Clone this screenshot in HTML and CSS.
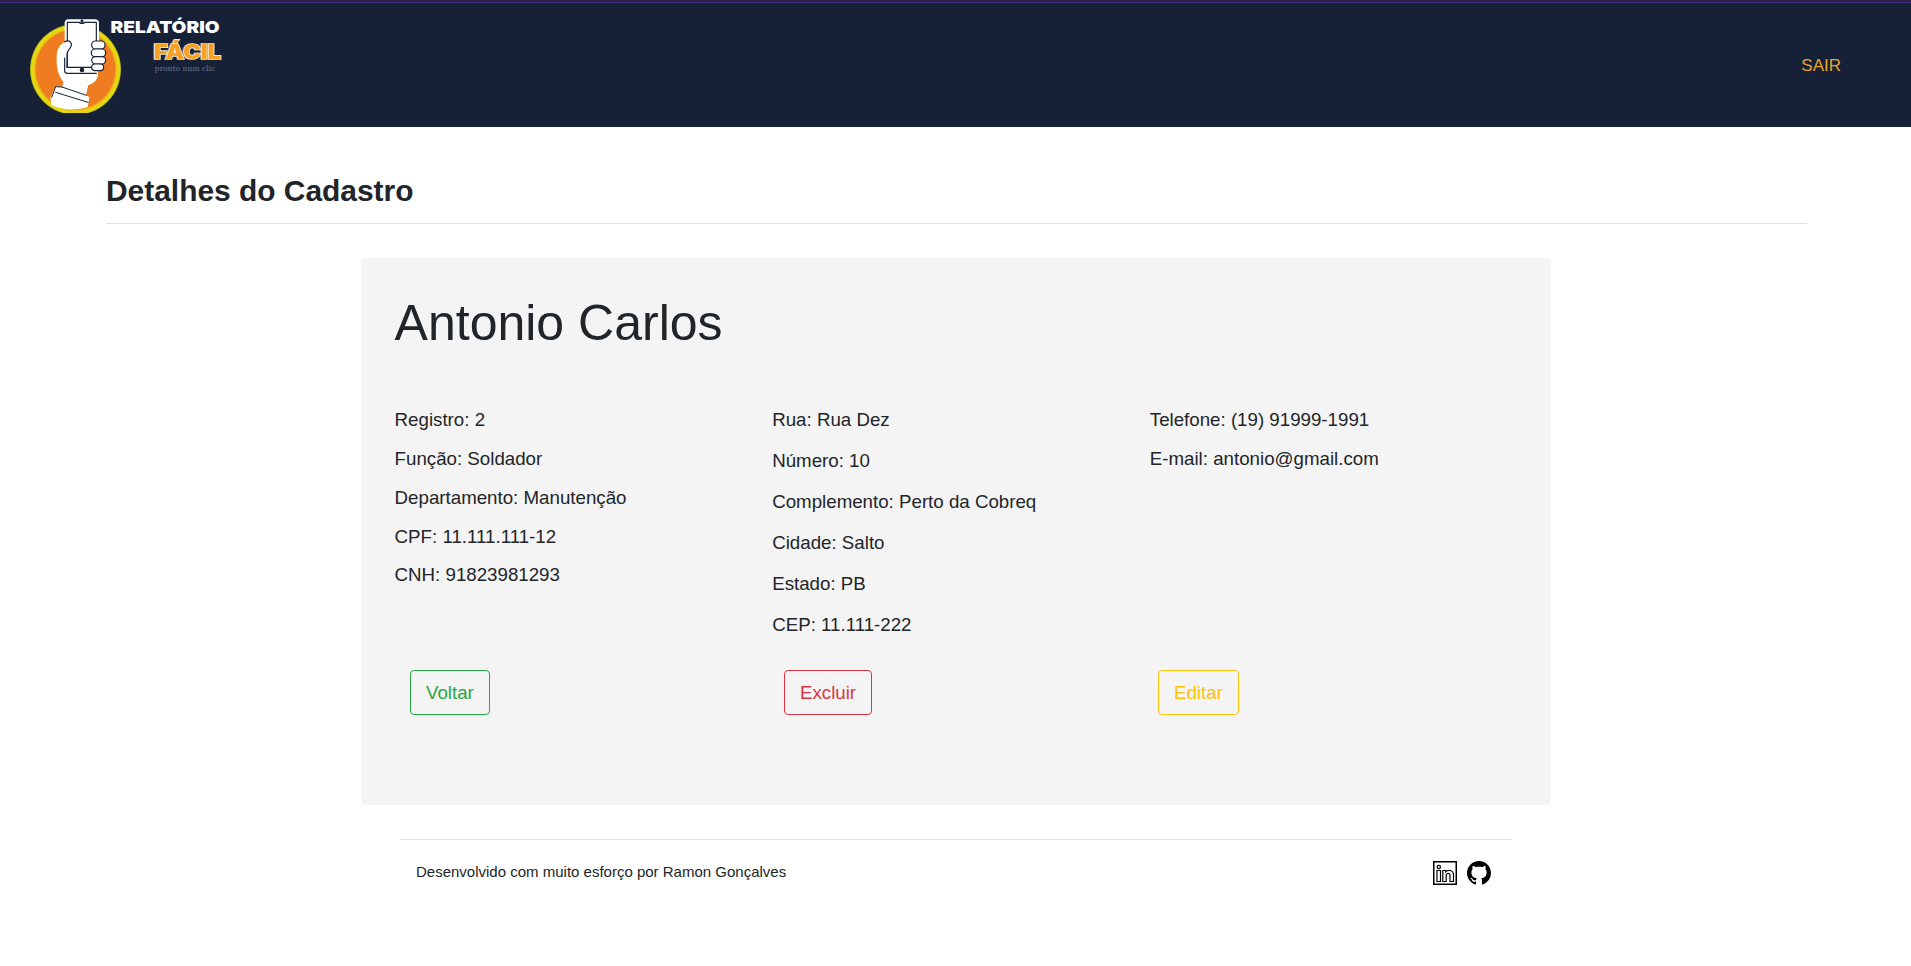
FILE: index.html
```html
<!DOCTYPE html>
<html lang="pt-BR">
<head>
<meta charset="utf-8">
<title>Relatório Fácil</title>
<link rel="stylesheet" href="styles.css">
</head>
<body>
<header class="navbar">
  <svg class="logo" viewBox="0 0 230 124" width="230" height="124" role="img" aria-label="Relatório Fácil">
    <defs>
      <radialGradient id="ring"><stop offset="0.86" stop-color="#f07c22"/><stop offset="0.91" stop-color="#e6d010"/><stop offset="0.97" stop-color="#e6dc12"/><stop offset="1" stop-color="#a3a01c"/></radialGradient>
      <clipPath id="emblem"><rect x="30" y="0" width="92" height="113"/></clipPath>
    </defs>
    <circle cx="75.500" cy="69.500" r="45.500" fill="url(#ring)" clip-path="url(#emblem)"/>
    <g transform="translate(25 10) scale(0.33333)" stroke-linejoin="round" stroke-linecap="round">
      <path d="M118 95C100 108 94 122 95 150C95 180 103 202 116 216L112 230L92 229L76 264C80 275 77 280 80 285C112 302 158 301 188 291L193 262L183 255L190 225C211 220 221 205 219 181V90Z" fill="#fff"/>
      <rect x="119" y="28" width="103" height="162" rx="12" fill="#fff"/>
      <path d="M127 37H165V40H177V37H214V172H127Z" fill="#fff" stroke="#17223a" stroke-width="3.500"/>
      <path d="M167 29H175V38H167Z" fill="#17223a"/>
      <path d="M119 144V182Q119 190 127 190H214" fill="none" stroke="#17223a" stroke-width="3.500"/>
      <path d="M118 96C132 87 144 99 137 111C132 121 126 121 126 135V172" fill="#fff" stroke="#17223a" stroke-width="3.500"/>
      <circle cx="171" cy="180" r="7" fill="#17223a"/>
      <g fill="#fff" stroke="#17223a" stroke-width="3.500">
        <rect x="200" y="93" width="40" height="24" rx="11"/><rect x="199" y="117" width="43" height="23" rx="11"/><rect x="200" y="140" width="42" height="22" rx="11"/><rect x="200" y="162" width="36" height="20" rx="10"/>
      </g>
      <path d="M111 231L184 256M92 230L111 231M92 247L189 277M80 262L92 230" fill="none" stroke="#17223a" stroke-width="3"/>
    </g>
    <text class="logo-name" x="110.500" y="33" textLength="109" lengthAdjust="spacingAndGlyphs">RELATÓRIO</text>
    <text class="logo-accent" x="154" y="59" textLength="67" lengthAdjust="spacingAndGlyphs">FÁCIL</text>
    <text class="logo-tag" x="154.500" y="70.500" textLength="61" lengthAdjust="spacingAndGlyphs">pronto num clic</text>
  </svg>
  <a class="logout">SAIR</a>
</header>
<main>
  <h1 class="page-title">Detalhes do Cadastro</h1>
  <section class="card">
    <h2 class="name">Antonio Carlos</h2>
    <div class="details">
      <div class="column">
        <p>Registro: 2</p><p>Função: Soldador</p><p>Departamento: Manutenção</p><p>CPF: 11.111.111-12</p><p>CNH: 91823981293</p>
      </div>
      <div class="column address">
        <p>Rua: Rua Dez</p><p>Número: 10</p><p>Complemento: Perto da Cobreq</p><p>Cidade: Salto</p><p>Estado: PB</p><p>CEP: 11.111-222</p>
      </div>
      <div class="column">
        <p>Telefone: (19) 91999-1991</p><p>E-mail: antonio@gmail.com</p>
      </div>
    </div>
    <div class="actions">
      <div><button class="btn back">Voltar</button></div>
      <div><button class="btn delete">Excluir</button></div>
      <div><button class="btn edit">Editar</button></div>
    </div>
  </section>
</main>
<footer class="footer">
  <span>Desenvolvido com muito esforço por Ramon Gonçalves</span>
  <div class="social">
    <svg viewBox="0 0 24 24" width="24" height="24" fill="none" stroke="#000">
      <rect x="0.750" y="0.750" width="22.500" height="22.500" stroke-width="1.500"/>
      <circle cx="5.800" cy="6" r="1.700" stroke-width="1.200"/>
      <path stroke-width="1.200" d="M4 9.500H7.500V20.500H4Z M9.800 9.500H12.800V10.700C15 8.500 20.500 8.700 20.500 14V20.500H17V14.500C17 11.500 13.200 11.500 13.200 14.500V20.500H9.800Z"/>
    </svg>
    <svg viewBox="0 0 16 16" width="24" height="24">
      <path d="M8 0C3.580 0 0 3.580 0 8c0 3.540 2.290 6.530 5.470 7.590.4.070.55-.17.55-.38 0-.19-.01-.82-.01-1.490-2.010.37-2.530-.49-2.690-.94-.09-.23-.48-.94-.82-1.130-.28-.15-.68-.52-.01-.53.63-.01 1.080.58 1.230.82.72 1.210 1.870.87 2.330.66.07-.52.28-.87.51-1.070-1.780-.2-3.640-.89-3.640-3.950 0-.87.31-1.590.82-2.150-.08-.2-.36-1.020.08-2.120 0 0 .67-.21 2.200.82.64-.18 1.320-.27 2-.27s1.360.09 2 .27c1.530-1.040 2.200-.82 2.200-.82.44 1.100.16 1.920.08 2.120.51.56.82 1.270.82 2.150 0 3.070-1.870 3.750-3.650 3.950.29.25.54.73.54 1.480 0 1.070-.01 1.930-.01 2.200 0 .21.15.46.55.38A8.010 8.010 0 0 0 16 8c0-4.420-3.580-8-8-8Z"/>
    </svg>
  </div>
</footer>
</body>
</html>
```
FILE: styles.css
```css
* { box-sizing: border-box; }
body { margin: 0; background: #fff; color: #212529; font-family: "Liberation Sans", Arial, sans-serif; }
h1, h2, p { margin: 0; font-weight: 400; }
.navbar { display: flex; justify-content: space-between; height: 127px; padding-right: 70px; background: #162138; border-top: 2px solid #2c1c4c; box-shadow: inset 0 1px #40307c; }
.logo { display: block; margin-top: -2px; }
.logo-name { font: 900 16.5px Inter, sans-serif; fill: #fff; }
.logo-accent { font: 900 19.5px Inter, sans-serif; fill: #f5a223; stroke: #f1e3cf; stroke-width: 1.6px; paint-order: stroke; filter: drop-shadow(-1px 0 0 #66708a); }
.logo-tag { font: 8px "DejaVu Serif", serif; fill: #68718a; }
.logout { margin-top: 52px; color: #e7a52b; font-size: 17px; line-height: 24px; }
.page-title { margin: 46px 104px 0 106px; padding-bottom: 14px; border-bottom: 1px solid #dfe1e3; font-size: 29.92px; font-weight: 700; line-height: 36px; }
.card { width: 1190px; height: 547px; margin: 34px 0 0 361px; padding: 35px 22px 0 33.6px; border-radius: 5px; background: #f4f4f4; }
.name { height: 106px; font-size: 50px; line-height: 60px; }
.details { display: grid; grid-template-columns: repeat(3, 377.6px); height: 271px; font-size: 18.72px; }
.column { padding-top: 2px; line-height: 38.85px; }
.address { padding-top: 0; line-height: 41px; }
.actions { display: grid; grid-template-columns: repeat(3, 374px); padding-left: 15.4px; }
.btn { height: 45px; padding: 0 15px; border: 1px solid; border-radius: 4px; background: transparent; font: 18.72px "Liberation Sans", Arial, sans-serif; }
.back { color: #28a745; }
.delete { color: #dc3545; }
.edit { color: #ffc107; }
.footer { display: flex; justify-content: space-between; width: 1110px; margin: 34px 0 0 401px; padding: 21px 20px 0 15px; border-top: 1px solid #dfe0e1; font-size: 15px; line-height: 22px; }
.social { display: flex; gap: 10px; }
```
